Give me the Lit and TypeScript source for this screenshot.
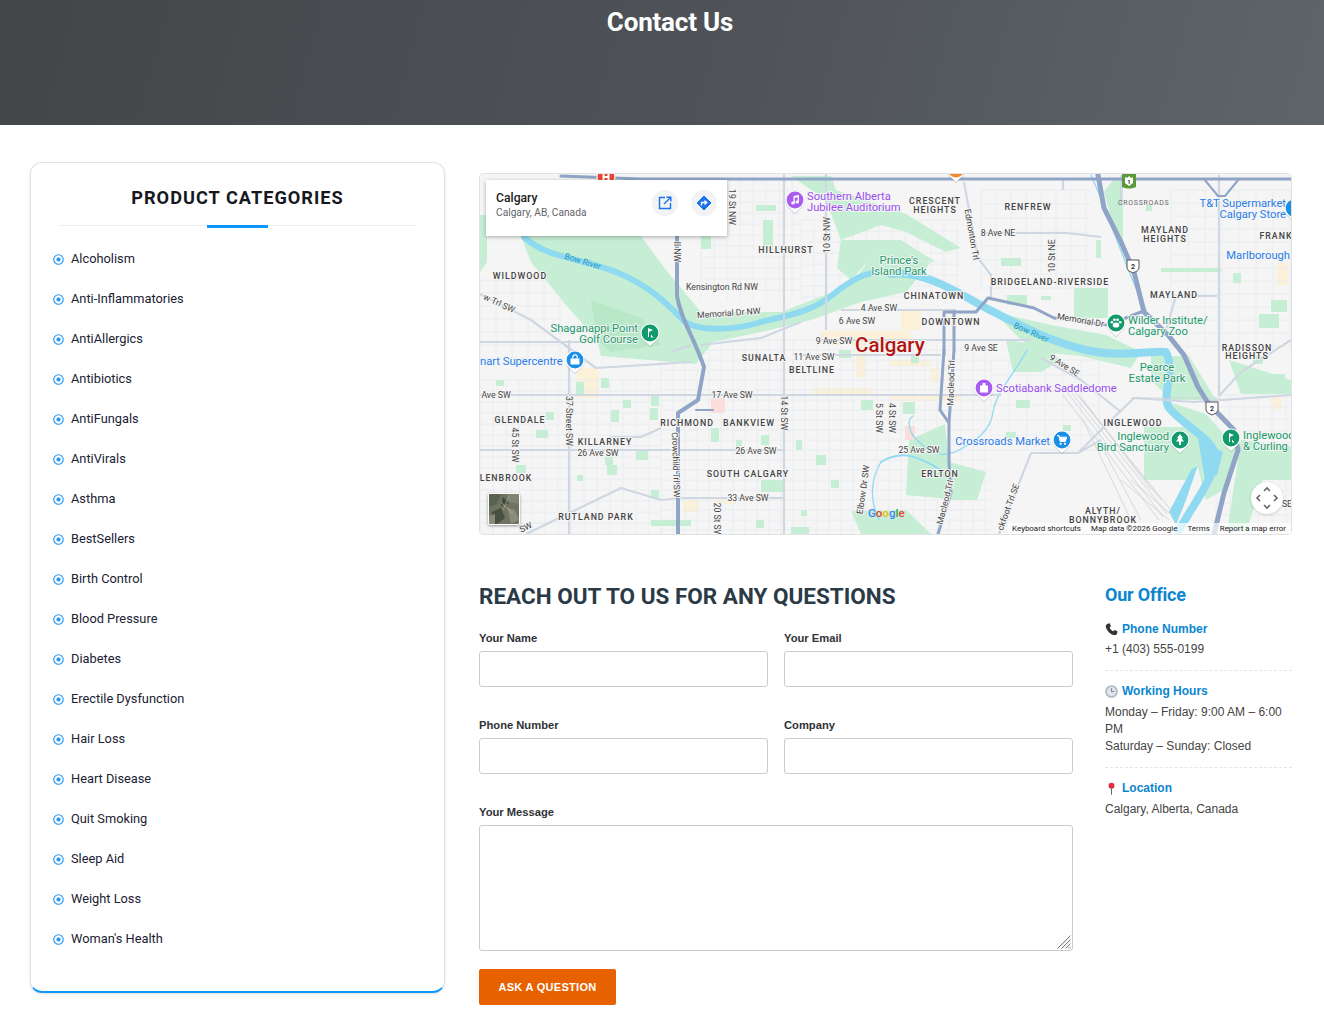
import {LitElement, html, svg, css} from 'lit'
import {customElement} from 'lit/decorators.js'

const CATEGORIES = [
  'Alcoholism', 'Anti-Inflammatories', 'AntiAllergics', 'Antibiotics', 'AntiFungals', 'AntiVirals',
  'Asthma', 'BestSellers', 'Birth Control', 'Blood Pressure', 'Diabetes', 'Erectile Dysfunction',
  'Hair Loss', 'Heart Disease', 'Quit Smoking', 'Sleep Aid', 'Weight Loss', "Woman's Health",
]

// map coordinates below are page pixels, the svg viewBox starts at the map's corner
type Label = [string, number, number, number?]

const AREAS: Label[] = [
  ['WILDWOOD', 519, 279], ['HILLHURST', 785, 253], ['CRESCENT', 934, 204], ['HEIGHTS', 934, 213],
  ['RENFREW', 1027, 210], ['MAYLAND', 1164, 233], ['HEIGHTS', 1164, 242], ['FRANK', 1275, 239],
  ['BRIDGELAND-RIVERSIDE', 1049, 285], ['CHINATOWN', 933, 299], ['MAYLAND', 1173, 298],
  ['DOWNTOWN', 950, 325], ['RADISSON', 1246, 351], ['HEIGHTS', 1246, 359], ['SUNALTA', 763, 361],
  ['BELTLINE', 811, 373], ['GLENDALE', 519, 423], ['RICHMOND', 686, 426], ['BANKVIEW', 748, 426],
  ['KILLARNEY', 604, 445], ['INGLEWOOD', 1132, 426], ['SOUTH CALGARY', 747, 477], ['ERLTON', 939, 477],
  ['LENBROOK', 505, 481], ['RUTLAND PARK', 595, 520], ['ALYTH/', 1102, 514], ['BONNYBROOK', 1102, 523],
]

const STREETS: Label[] = [
  ['Kensington Rd NW', 721, 290], ['Memorial Dr NW', 728, 316, -4], ['4 Ave SW', 878, 311], ['6 Ave SW', 856, 324],
  ['9 Ave SW', 833, 344], ['11 Ave SW', 813, 360], ['9 Ave SE', 980, 351], ['8 Ave NE', 997, 236],
  ['Memorial Dr', 1079, 323, 10], ['17 Ave SW', 731, 398], ['26 Ave SW', 597, 456], ['26 Ave SW', 755, 454],
  ['33 Ave SW', 747, 501], ['25 Ave SW', 918, 453], ['Ave SW', 495, 398], ['w Trl SW', 497, 306, 25],
  ['19 St NW', 728, 207, 90], ['10 St NW', 829, 235, -90], ['10 St NE', 1054, 256, -90], ['Edmonton Trl', 968, 235, 80],
  ['37 Street SW', 565, 421, 90], ['45 St SW', 511, 445, 90], ['14 St SW', 780, 413, 90], ['5 St SW', 875, 418, 90],
  ['4 St SW', 888, 418, 90], ['20 St SW', 713, 520, 90], ['Crowchild Trl SW', 672, 465, 88], ['Macleod Trl', 953, 383, -88],
  ['Macleod Trl', 947, 503, -76], ['Elbow Dr SW', 865, 490, -82], ['ckfoot Trl SE', 1010, 508, -70],
  ['9 Ave SE', 1062, 368, 32], ['SE', 1286, 507], ['SW', 526, 530, -25], ['ll NW', 673, 252, 90],
]

const POI: {lines: string[]; x: number; y: number; anchor: string; cls: string}[] = [
  {lines: ['Southern Alberta', 'Jubilee Auditorium'], x: 806, y: 200, anchor: 'start', cls: 'purple'},
  {lines: ['Shaganappi Point', 'Golf Course'], x: 637, y: 332, anchor: 'end', cls: 'green'},
  {lines: ["Prince's", 'Island Park'], x: 898, y: 264, anchor: 'middle', cls: 'green'},
  {lines: ['Wilder Institute/', 'Calgary Zoo'], x: 1127, y: 324, anchor: 'start', cls: 'green'},
  {lines: ['nart Supercentre'], x: 479, y: 365, anchor: 'start', cls: 'blue'},
  {lines: ['T&T Supermarket', 'Calgary Store'], x: 1285, y: 207, anchor: 'end', cls: 'blue'},
  {lines: ['Marlborough'], x: 1289, y: 259, anchor: 'end', cls: 'blue'},
  {lines: ['Pearce', 'Estate Park'], x: 1156, y: 371, anchor: 'middle', cls: 'green'},
  {lines: ['Scotiabank Saddledome'], x: 995, y: 392, anchor: 'start', cls: 'purple'},
  {lines: ['Crossroads Market'], x: 1049, y: 445, anchor: 'end', cls: 'blue'},
  {lines: ['Inglewood', 'Bird Sanctuary'], x: 1168, y: 440, anchor: 'end', cls: 'green'},
  {lines: ['Inglewood', '& Curling'], x: 1242, y: 439, anchor: 'start', cls: 'green'},
]

const PARKS = [
  'M520 236 L640 236 L665 270 L700 312 L780 312 L850 285 L872 255 L930 262 L905 292 L860 302 L810 320 L760 332 L712 342 L695 364 L600 356 L596 340 L565 305 L530 262 Z',
  'M790 176 L830 176 L835 190 L905 214 L960 248 L945 252 L905 232 L880 225 L840 240 L825 200 Z',
  'M840 240 L900 240 L935 262 L872 256 L850 280 L836 268 Z',
  'M479 215 L486 215 L486 262 L479 272 Z',
  'M993 312 L1050 325 L1105 335 L1140 352 L1130 368 L1080 356 L1040 352 L1020 340 Z',
  'M1073 288 L1107 288 L1107 318 L1073 318 Z',
  'M1103 192 L1112 180 L1122 180 L1122 240 L1115 238 Z',
  'M1150 356 L1188 356 L1215 400 L1170 400 L1150 380 Z',
  'M1228 360 L1290 380 L1290 394 L1240 394 Z',
  'M1168 402 L1205 414 L1228 440 L1240 452 L1222 490 L1205 500 L1190 440 Z',
  'M1143 427 L1190 427 L1197 462 L1186 480 L1143 480 Z',
  'M1240 440 L1290 446 L1290 480 L1262 480 L1245 532 L1226 532 Z',
  'M908 440 L944 424 L948 462 L985 472 L976 500 L952 500 L938 498 L905 495 Z',
  'M1005 340 L1040 345 L1060 360 L1040 372 L1012 372 Z',
  'M850 511 L905 510 L930 534 L860 534 Z',
]

// small patches of green scattered between the streets: x, y, w, h
const PATCHES = [
  [630, 247, 11, 11], [700, 223, 10, 26], [755, 205, 20, 6], [762, 220, 10, 30], [845, 205, 10, 20],
  [1012, 205, 8, 6], [1000, 258, 20, 8], [1048, 240, 6, 12], [1095, 240, 5, 18], [1145, 205, 6, 6],
  [1006, 295, 20, 10], [1040, 296, 10, 4], [1160, 268, 60, 4], [1270, 300, 16, 12], [1240, 200, 10, 6],
  [1232, 273, 8, 10], [1258, 314, 20, 14], [650, 396, 8, 10], [649, 408, 8, 12], [610, 410, 8, 12],
  [545, 412, 8, 8], [495, 380, 8, 6], [622, 400, 8, 8], [604, 457, 8, 8], [635, 450, 12, 10], [606, 465, 10, 10],
  [515, 465, 10, 8], [576, 475, 6, 6], [535, 430, 12, 8], [710, 428, 8, 14], [735, 440, 6, 6], [760, 435, 8, 10],
  [760, 480, 22, 12], [795, 440, 6, 10], [815, 455, 10, 10], [830, 480, 8, 8], [650, 490, 8, 8],
  [650, 520, 40, 6], [755, 520, 8, 8], [800, 510, 6, 6], [790, 527, 18, 7], [575, 382, 8, 14], [600, 378, 8, 10],
  [1005, 432, 10, 6], [1062, 425, 8, 6], [1272, 374, 12, 14], [1252, 356, 10, 8],
  [902, 402, 12, 12], [860, 400, 12, 10], [838, 350, 12, 8], [910, 355, 8, 8], [1015, 400, 14, 8],
]

const TAN = [
  [820, 331, 90, 14], [855, 345, 10, 32], [890, 360, 40, 6], [900, 310, 20, 20], [1276, 263, 11, 22],
  [576, 368, 22, 30], [812, 388, 60, 6], [890, 395, 70, 6], [1270, 397, 10, 12], [930, 368, 8, 14],
  [682, 500, 16, 12], [715, 498, 20, 6],
]

const gridPath = (x0: number, x1: number, y0: number, y1: number, dx: number, dy: number) => {
  let d = ''
  for (let x = x0; x <= x1; x += dx) d += `M${x} ${y0}V${y1}`
  for (let y = y0; y <= y1; y += dy) d += `M${x0} ${y}H${x1}`
  return d
}

const GRID = [
  gridPath(700, 800, 180, 300, 13, 11), gridPath(800, 960, 220, 300, 13, 11), gridPath(1170, 1290, 190, 350, 17, 13),
  gridPath(980, 1090, 190, 290, 15, 14), gridPath(479, 660, 380, 534, 13, 11), gridPath(660, 990, 340, 534, 12, 10),
  gridPath(479, 560, 280, 360, 16, 13), gridPath(1215, 1290, 395, 534, 14, 12), gridPath(990, 1100, 360, 450, 18, 15),
]

const pin = (x: number, y: number, color: string, icon: unknown) => svg`
  <g transform="translate(${x} ${y})">
    <path d="M0 13 L-6 7.5 A9.6 9.6 0 1 1 6 7.5 Z" fill="#fff" filter="url(#pinShadow)"></path>
    <circle r="8.4" fill=${color}></circle>
    ${icon}
  </g>`

const shield = (x: number, y: number, n: string) => svg`
  <g transform="translate(${x} ${y})">
    <path d="M-6 -6 H6 V2 Q6 5 0 7 Q-6 5 -6 2 Z" fill="#fff" stroke="#555" stroke-width="1"></path>
    <text class="shield" text-anchor="middle" y="2.5">${n}</text>
  </g>`

const ICONS = {
  music: svg`<path d="M-1.5 -4 L4 -5 V2 A1.8 1.5 0 1 1 2.6 .6 V-2.8 L-.2 -2.2 V3 A1.8 1.5 0 1 1 -1.5 1.6 Z" fill="#fff"></path>`,
  golf: svg`<path d="M-2 -5 L3 -3 L-1 -1 V4 H-2 Z M1 1.5 L3.5 4.5 H1 Z" fill="#fff"></path>`,
  bag: svg`<path d="M-4.5 -1.5 H4.5 V4.5 H-4.5 Z" fill="#fff"></path><path d="M-2.2 -1.5 V-3 A2.2 2.2 0 0 1 2.2 -3 V-1.5" fill="none" stroke="#fff" stroke-width="1.2"></path>`,
  paw: svg`<g fill="#fff"><ellipse cy="2" rx="3.3" ry="2.6"></ellipse><circle cx="-4.2" cy="-.8" r="1.3"></circle><circle cx="-1.6" cy="-3.2" r="1.4"></circle><circle cx="1.6" cy="-3.2" r="1.4"></circle><circle cx="4.2" cy="-.8" r="1.3"></circle></g>`,
  cart: svg`<path d="M-5 -4.5 H-3 L-1.8 1.5 H3.4 L4.6 -2.8 H-2.6" fill="#fff" stroke="#fff" stroke-width="1"></path><circle cx="-1.4" cy="3.8" r="1.1" fill="#fff"></circle><circle cx="3" cy="3.8" r="1.1" fill="#fff"></circle>`,
  tree: svg`<path d="M0 -6 L3 -2 H1.6 L4 1.5 H1 V5 H-1 V1.5 H-4 L-1.6 -2 H-3 Z" fill="#fff"></path>`,
  stadium: svg`<path d="M-4 -2.5 H-1.5 V-5 H1.5 V-2.5 H4 V4.5 H-4 Z" fill="#fff"></path>`,
  h: svg`<path d="M-3.5 -4 H-1.5 V-1 H1.5 V-4 H3.5 V4 H1.5 V1 H-1.5 V4 H-3.5 Z" fill="#fff"></path>`,
  none: svg``,
}

@customElement('app-root')
export class AppRoot extends LitElement {
  static override styles = css`
    :host {
      display: block;
      background: #fff;
      font-family: 'Roboto', sans-serif;
    }

    .hero {
      height: 125px;
      background: linear-gradient(105deg, #434648 0%, #4f5359 55%, #5f646b 100%);
      box-sizing: border-box;
      padding: 6px 0 0 16px;
      text-align: center;
    }
    .hero h1 {
      margin: 0;
      font-size: 26px;
      line-height: 32px;
      font-weight: 700;
      color: #fff;
      letter-spacing: -0.2px;
    }

    .page {
      display: grid;
      grid-template-columns: 415px 813px;
      column-gap: 34px;
      padding: 37px 0 20px 30px;
      align-items: start;
    }

    .side {
      box-sizing: border-box;
      height: 831px;
      padding: 0 28px;
      background: #fff;
      border: 1px solid #e2e2e2;
      border-bottom: 2px solid #0d99fb;
      border-radius: 12px;
      box-shadow: 0 1px 3px rgba(0, 0, 0, 0.12);
    }
    .side h3 {
      margin: 0;
      padding-top: 23px;
      font-size: 18.2px;
      line-height: 24px;
      font-weight: 700;
      letter-spacing: 1px;
      text-align: center;
      color: #16181d;
    }
    .side-rule {
      position: relative;
      margin-top: 15px;
      height: 1px;
      background: #eee;
    }
    .side-rule::after {
      content: '';
      position: absolute;
      left: 148px;
      top: 0;
      width: 61px;
      height: 3px;
      background: #0d99fb;
    }
    .cats {
      list-style: none;
      margin: 12px 0 0 -6px;
      padding: 0;
    }
    .cats li {
      display: flex;
      align-items: center;
      gap: 7px;
      height: 40px;
      font-size: 12.8px;
      color: #1a2233;
    }
    .cats svg {
      width: 11px;
      height: 11px;
      flex: none;
      margin-top: 2px;
    }

    .map {
      position: relative;
      box-sizing: border-box;
      height: 362px;
      margin-top: 11px;
      overflow: hidden;
      border: 1px solid #e2e2e2;
      border-radius: 4px;
      background: #f5f5f5;
    }
    .map > svg {
      display: block;
      width: 812px;
      height: 360px;
    }
    .map text {
      font-family: 'Roboto', sans-serif;
    }
    .area {
      font-size: 8.8px;
      font-weight: 500;
      letter-spacing: 1px;
      fill: #444;
      text-anchor: middle;
      paint-order: stroke;
      stroke: #f5f5f5;
      stroke-width: 2px;
    }
    .street {
      font-size: 8.7px;
      fill: #444;
      text-anchor: middle;
      paint-order: stroke;
      stroke: #f5f5f5;
      stroke-width: 2px;
    }
    .crossroads {
      font-size: 7px;
      letter-spacing: 0.7px;
      fill: #666;
    }
    .city {
      font-size: 20.5px;
      font-weight: 500;
      fill: #b3140f;
      paint-order: stroke;
      stroke: #f5f5f5;
      stroke-width: 2px;
    }
    .poi {
      font-size: 11.2px;
      paint-order: stroke;
      stroke: #f5f5f5;
      stroke-width: 1.8px;
    }
    .purple { fill: #9a4ff0; }
    .green { fill: #1a9a6c; }
    .blue { fill: #2b7de9; }
    .river {
      font-size: 8.5px;
      fill: #2596b8;
      text-anchor: middle;
    }
    .shield {
      font-size: 7px;
      font-weight: 700;
      fill: #333;
    }
    .glogo {
      font-size: 11.5px;
      font-weight: 500;
    }

    .place {
      position: absolute;
      left: 6px;
      top: 6px;
      box-sizing: border-box;
      width: 241px;
      height: 56px;
      padding: 11px 10px;
      background: #fff;
      box-shadow: 0 1px 4px rgba(0, 0, 0, 0.3);
    }
    .place b {
      display: block;
      font-size: 12.2px;
      line-height: 15px;
      font-weight: 500;
      color: #222;
    }
    .place span {
      display: block;
      font-size: 10.2px;
      line-height: 14px;
      color: #5f6368;
    }
    .place-btn {
      position: absolute;
      top: 10px;
      width: 26px;
      height: 26px;
      border-radius: 50%;
      background: #f1f3f4;
      display: flex;
      align-items: center;
      justify-content: center;
    }
    .thumb {
      position: absolute;
      left: 8px;
      bottom: 9px;
      width: 32px;
      height: 32px;
      box-sizing: border-box;
      border: 1px solid #fff;
      border-radius: 2px;
      box-shadow: 0 1px 3px rgba(0, 0, 0, 0.4);
      overflow: hidden;
    }
    .thumb svg {
      display: block;
      width: 100%;
      height: 100%;
    }
    .recenter {
      position: absolute;
      right: 8px;
      bottom: 20px;
      width: 32px;
      height: 32px;
      border-radius: 50%;
      background: #fff;
      box-shadow: 0 1px 3px rgba(0, 0, 0, 0.15);
    }
    .recenter svg {
      display: block;
    }
    .attrib {
      position: absolute;
      right: 0;
      bottom: 0;
      display: flex;
      height: 11px;
      align-items: center;
      gap: 10px;
      padding: 0 5px 0 4px;
      background: rgba(255, 255, 255, 0.7);
      font-size: 7.95px;
      line-height: 11px;
      color: #222;
      white-space: nowrap;
    }

    .below {
      display: grid;
      grid-template-columns: 594px 187px;
      column-gap: 32px;
      margin-top: 46px;
    }

    .form h2 {
      margin: 0;
      font-size: 22.5px;
      line-height: 30px;
      font-weight: 700;
      color: #2a3a47;
    }
    .fields {
      display: grid;
      grid-template-columns: 289px 289px;
      column-gap: 16px;
      row-gap: 31px;
      margin-top: 20px;
    }
    label {
      display: block;
      font: 700 11.2px/14px 'Liberation Sans', Arial, sans-serif;
      color: #2f3237;
      margin-bottom: 6px;
    }
    input,
    textarea {
      display: block;
      box-sizing: border-box;
      width: 100%;
      height: 36px;
      margin: 0;
      padding: 6px 10px;
      border: 1px solid #ccc;
      border-radius: 3px;
      background: #fff;
      outline: none;
    }
    .full {
      grid-column: 1 / 3;
    }
    .area-wrap {
      position: relative;
    }
    textarea {
      height: 126px;
      resize: none;
    }
    .grip {
      position: absolute;
      right: 2px;
      bottom: 2px;
      width: 14px;
      height: 14px;
    }
    .send {
      display: block;
      width: 137px;
      height: 36px;
      margin-top: 18px;
      padding: 0;
      border: 0;
      border-radius: 2px;
      background: #e86100;
      color: #fff;
      font: 700 11px/36px 'Liberation Sans', Arial, sans-serif;
      letter-spacing: 0.3px;
      text-transform: uppercase;
    }

    .office h3 {
      margin: 0;
      font-size: 18px;
      line-height: 28px;
      font-weight: 700;
      color: #0a86d1;
      letter-spacing: -0.2px;
    }
    .block {
      padding: 12px 0;
      border-bottom: 1px dashed #e6e6e6;
      font: 12px/17px 'Liberation Sans', Arial, sans-serif;
      color: #444;
    }
    .block:last-child {
      border-bottom: 0;
    }
    .block h4 {
      display: flex;
      align-items: center;
      gap: 4px;
      margin: 0 0 4px;
      font: 700 12px/17px 'Liberation Sans', Arial, sans-serif;
      color: #0a86d1;
    }
    h3 + .block h4 {
      margin-bottom: 3px;
    }
    .block h4 svg {
      width: 13px;
      height: 13px;
      flex: none;
    }
  `

  private renderMap() {
    return svg`
      <svg viewBox="479 174 812 360" xmlns="http://www.w3.org/2000/svg">
        <defs>
          <filter id="pinShadow" x="-30%" y="-30%" width="160%" height="160%">
            <feDropShadow dx="0" dy="0.6" stdDeviation="0.7" flood-opacity="0.35"></feDropShadow>
          </filter>
        </defs>
        <rect x="479" y="174" width="812" height="360" fill="#f5f5f5"></rect>
        ${TAN.map(([x, y, w, h]) => svg`<rect x=${x} y=${y} width=${w} height=${h} fill="#fbf0d8"></rect>`)}
        ${GRID.map(d => svg`<path d=${d} fill="none" stroke="#eaecef" stroke-width="0.9"></path>`)}
        ${PARKS.map(d => svg`<path d=${d} fill="#c5eed4"></path>`)}
        <path d="M590 300 L640 318 L660 345 L610 352 L596 340 Z" fill="#b8e8c8"></path>
        ${PATCHES.map(([x, y, w, h]) => svg`<rect x=${x} y=${y} width=${w} height=${h} fill="#c5eed4"></rect>`)}
        <rect x="710" y="398" width="14" height="15" fill="#fbdedb"></rect>
        <rect x="904" y="426" width="10" height="14" fill="#fbdedb"></rect>

        <!-- water -->
        <g fill="none" stroke="#8fdaf0" stroke-linecap="round" stroke-linejoin="round">
          <path stroke-width="6" d="M523 237 C545 258 580 258 615 272 C650 286 668 306 684 322 C700 332 735 330 760 322 C785 316 810 312 830 296 C850 280 868 268 890 274"></path>
          <path stroke-width="8" d="M890 274 C925 270 960 295 985 308 C1020 326 1050 342 1085 350 C1120 358 1150 350 1165 352 C1175 372 1160 395 1168 408 C1185 428 1215 440 1214 458 C1212 480 1195 500 1178 530"></path>
          <path stroke-width="1.3" d="M1026 350 C1015 372 996 390 992 412 C990 430 975 440 965 446 C950 456 935 460 918 442 C908 434 905 420 912 416 M880 462 C870 478 868 500 878 520"></path>
          <path stroke-width="1.3" d="M1090 175 C1110 220 1125 270 1145 310"></path>
          <path stroke-width="2" d="M880 462 C900 450 915 455 940 470"></path>
        </g>
        <path d="M1197 438 L1222 452 L1216 475 L1204 480 Z M1168 512 L1190 470 L1197 465 L1185 500 L1175 525 Z" fill="#8fdaf0"></path>

        <!-- arterials -->
        <g fill="none" stroke="#cfd7e3" stroke-width="2.2" stroke-linejoin="round">
          <path d="M783 174 V534 M825 174 V330 M1218 175 V396 M568 340 V534 M479 395 H1000 M479 450 H783 M680 498 H783"></path>
          <path d="M479 294 L530 320 L595 368 L690 362 M700 345 L760 338 L800 322 M690 345 L670 352"></path>
          <path d="M980 233 H1066 L1100 237 M963 182 L977 258 L990 275 L990 298"></path>
          <path d="M1030 453 L998 534 M1077 453 L1107 423 L1133 398 L1193 402 L1290 395 M1030 453 L1077 453 L1100 440"></path>
          <path d="M1040 358 L1080 380 L1120 412 M1290 340 L1240 372 L1218 396"></path>
          <path d="M610 437 L640 437 L660 428 M525 534 L620 488 L660 500 L680 498"></path>
          <path d="M479 342 H590 M840 310 H955 M820 340 H1030 M800 355 H940 M1062 178 V190"></path>
          <path d="M1165 330 L1175 296 H1216 M1120 175 V205"></path>
        </g>
        <g fill="none" stroke="#cdd0d6" stroke-width="0.8">
          <path d="M1062 395 L1158 520 M1066 392 L1162 517 M1070 392 L1166 514 M1074 392 L1170 510 M1078 395 L1160 500 M1082 400 L1150 490 M1082 420 L1130 520 M1100 445 L1140 520 M1130 398 L1220 398 M1120 480 L1168 520 M1130 480 L1172 516"></path>
        </g>

        <!-- highways -->
        <g fill="none" stroke="#8fa4c6" stroke-linejoin="round" stroke-linecap="round">
          <path stroke-width="3.2" d="M560 176 L640 179 H1291"></path>
          <path stroke-width="4" d="M676 236 V296 C680 320 692 335 703 367 L697 400 L677 413 V534"></path>
          <path stroke-width="5" d="M1097 175 L1103 208 L1120 242 L1133 272 L1143 312 L1167 335 L1183 355 L1197 387 L1207 403 L1233 430 L1237 450 L1223 493 L1213 534"></path>
          <path stroke-width="3" d="M943 355 V312 H975 L987 298 L1033 308 L1053 318 L1107 325 L1140 312"></path>
          <path stroke-width="3" d="M943 350 L939 410 L948 423 V463 L950 493 L937 534 M953 312 V350 L948 423"></path>
          <path stroke-width="2" d="M1203 179 L1217 196 L1223 196 M1238 179 L1224 196"></path>
          <path stroke-width="2" d="M695 410 L712 410"></path>
        </g>

        ${POI.map(p => p.lines.map((l, i) => svg`<text class="poi ${p.cls}" x=${p.x} y=${p.y + i * 11} text-anchor=${p.anchor}>${l}</text>`))}
        ${AREAS.map(([t, x, y]) => svg`<text class="area" x=${x} y=${y}>${t}</text>`)}
        ${STREETS.map(([t, x, y, r]) => svg`<text class="street" x=${x} y=${y} transform=${r ? `rotate(${r} ${x} ${y})` : ''}>${t}</text>`)}
        <text class="crossroads" x="1117" y="205">CROSSROADS</text>
        <text class="city" x="854" y="352">Calgary</text>
        <text class="river" x="581" y="264" transform="rotate(17 581 264)">Bow River</text>
        <text class="river" x="1029" y="335" transform="rotate(24 1029 335)">Bow River</text>

        ${pin(605, 177, '#ea4335', ICONS.h)}
        ${pin(955, 169, '#f28a2e', ICONS.none)}
        ${pin(794, 200, '#a85cf0', ICONS.music)}
        ${pin(649, 333, '#12996c', ICONS.golf)}
        ${pin(574, 360, '#1a8fe8', ICONS.bag)}
        ${pin(1115, 323, '#12996c', ICONS.paw)}
        ${pin(1293, 208, '#1a8fe8', ICONS.none)}
        ${pin(983, 388, '#a85cf0', ICONS.stadium)}
        ${pin(1061, 440, '#1a8fe8', ICONS.cart)}
        ${pin(1179, 440, '#12996c', ICONS.tree)}
        ${pin(1230, 438, '#12996c', ICONS.golf)}

        <g transform="translate(1128 181)">
          <path d="M-7 -7 H7 V6 Q0 9 -7 6 Z" fill="#5b9a3c"></path>
          <path d="M0 -5 L2 -3 L4 -4 L4 2 L0 5 L-4 2 L-4 -4 L-2 -3 Z" fill="#fff"></path>
          <text class="shield" text-anchor="middle" y="2.5" style="font-size:6px">1</text>
        </g>
        ${shield(1132, 266, '2')}
        ${shield(1211, 408, '2')}

        <text class="glogo" x="867" y="517"><tspan fill="#4285f4">G</tspan><tspan fill="#ea4335">o</tspan><tspan fill="#fbbc05">o</tspan><tspan fill="#4285f4">g</tspan><tspan fill="#34a853">l</tspan><tspan fill="#ea4335">e</tspan></text>
      </svg>
    `
  }

  override render() {
    return html`
      <section class="hero"><h1>Contact Us</h1></section>
      <div class="page">
        <aside class="side">
          <h3>PRODUCT CATEGORIES</h3>
          <div class="side-rule"></div>
          <ul class="cats">
            ${CATEGORIES.map(c => html`
              <li>
                <svg viewBox="0 0 10 10"><circle cx="5" cy="5" r="4.3" fill="none" stroke="#2196f3" stroke-width="1"></circle><circle cx="5" cy="5" r="1.9" fill="#2196f3"></circle></svg>
                ${c}
              </li>`)}
          </ul>
        </aside>
        <main>
          <div class="map">
            ${this.renderMap()}
            <div class="place">
              <b>Calgary</b>
              <span>Calgary, AB, Canada</span>
              <div class="place-btn" style="left:166px">
                <svg width="14" height="14" viewBox="0 0 14 14" fill="none" stroke="#1a73e8" stroke-width="1.4"><path d="M7 1.5H1.5V12.5H12.5V7"></path><path d="M8.5 1.2H12.8V5.5M12.5 1.5L6 8"></path></svg>
              </div>
              <div class="place-btn" style="left:205px">
                <svg width="16" height="16" viewBox="0 0 16 16"><path d="M8 1L15 8L8 15L1 8Z" fill="#1a73e8" stroke="#1a73e8" stroke-linejoin="round"></path><path d="M5.5 10.5V7.5H10M8.5 5.5L10.8 7.5L8.5 9.5" fill="none" stroke="#fff" stroke-width="1.3"></path></svg>
              </div>
            </div>
            <div class="thumb">
              <svg viewBox="0 0 30 30">
                <rect width="30" height="30" fill="#6d7360"></rect>
                <path d="M0 0H12L8 10L0 13Z" fill="#596350"></path>
                <path d="M18 0H30V10L20 8Z" fill="#7f8470"></path>
                <path d="M3 18L12 14L16 24L8 30H3Z" fill="#465040"></path>
                <path d="M18 13L26 16L30 26L22 30Z" fill="#8c8b78"></path>
                <path d="M14 3L20 9L12 12Z" fill="#3f4a3c"></path>
                <path d="M0 22L6 20L6 30H0Z" fill="#8b8a75"></path>
                <path d="M12 8L24 20M20 2L14 16" stroke="#a8a592" stroke-width="0.8"></path>
              </svg>
            </div>
            <div class="recenter">
              <svg width="32" height="32" viewBox="0 0 32 32" fill="none" stroke="#666" stroke-width="1.6"><path d="M13 9L16 6L19 9M13 23L16 26L19 23M9 13L6 16L9 19M23 13L26 16L23 19"></path></svg>
            </div>
            <div class="attrib">
              <span>Keyboard shortcuts</span><span>Map data ©2026 Google</span><span>Terms</span><span>Report a map error</span>
            </div>
          </div>

          <div class="below">
            <section class="form">
              <h2>REACH OUT TO US FOR ANY QUESTIONS</h2>
              <div class="fields">
                <div><label>Your Name</label><input type="text" /></div>
                <div><label>Your Email</label><input type="text" /></div>
                <div><label>Phone Number</label><input type="text" /></div>
                <div><label>Company</label><input type="text" /></div>
                <div class="full">
                  <label>Your Message</label>
                  <div class="area-wrap">
                    <textarea></textarea>
                    <svg class="grip" viewBox="0 0 14 14" fill="none" stroke-width="1"><path d="M13.5 .5L.5 13.5M13.5 4.5L4.5 13.5M13.5 8.5L8.5 13.5M13.5 12L12 13.5" stroke="#777"></path><path d="M13.5 2L2 13.5M13.5 6L6 13.5M13.5 10L10 13.5" stroke="#ddd"></path></svg>
                  </div>
                </div>
              </div>
              <button class="send">Ask a question</button>
            </section>
            <section class="office">
              <h3>Our Office</h3>
              <div class="block">
                <h4><svg viewBox="0 0 14 14"><path d="M3 .8L5.2 .3L6.4 3.6L5 4.8C5.5 6.4 7.2 8.3 9 9L10.3 7.6L13.5 9L13 11.4C12.6 12.8 11 13.4 9.6 13C5.2 11.8 1.8 8 .9 4.2C.6 2.8 1.6 1.3 3 .8Z" fill="#333"></path></svg>Phone Number</h4>
                +1 (403) 555-0199
              </div>
              <div class="block">
                <h4><svg viewBox="0 0 14 14"><circle cx="7" cy="7" r="6.8" fill="#a9b8c4"></circle><circle cx="7" cy="7" r="5" fill="#dfe6ec"></circle><path d="M7 3.4V7H10" fill="none" stroke="#7d8c99" stroke-width="1.2"></path></svg>Working Hours</h4>
                Monday – Friday: 9:00 AM – 6:00 PM<br />Saturday – Sunday: Closed
              </div>
              <div class="block">
                <h4><svg viewBox="0 0 14 14"><circle cx="7" cy="4" r="3.2" fill="#dd2e44"></circle><path d="M7 7V13.6" stroke="#666" stroke-width="1.1"></path></svg>Location</h4>
                Calgary, Alberta, Canada
              </div>
            </section>
          </div>
        </main>
      </div>
    `
  }
}

declare global {
  interface HTMLElementTagNameMap {
    'app-root': AppRoot
  }
}
